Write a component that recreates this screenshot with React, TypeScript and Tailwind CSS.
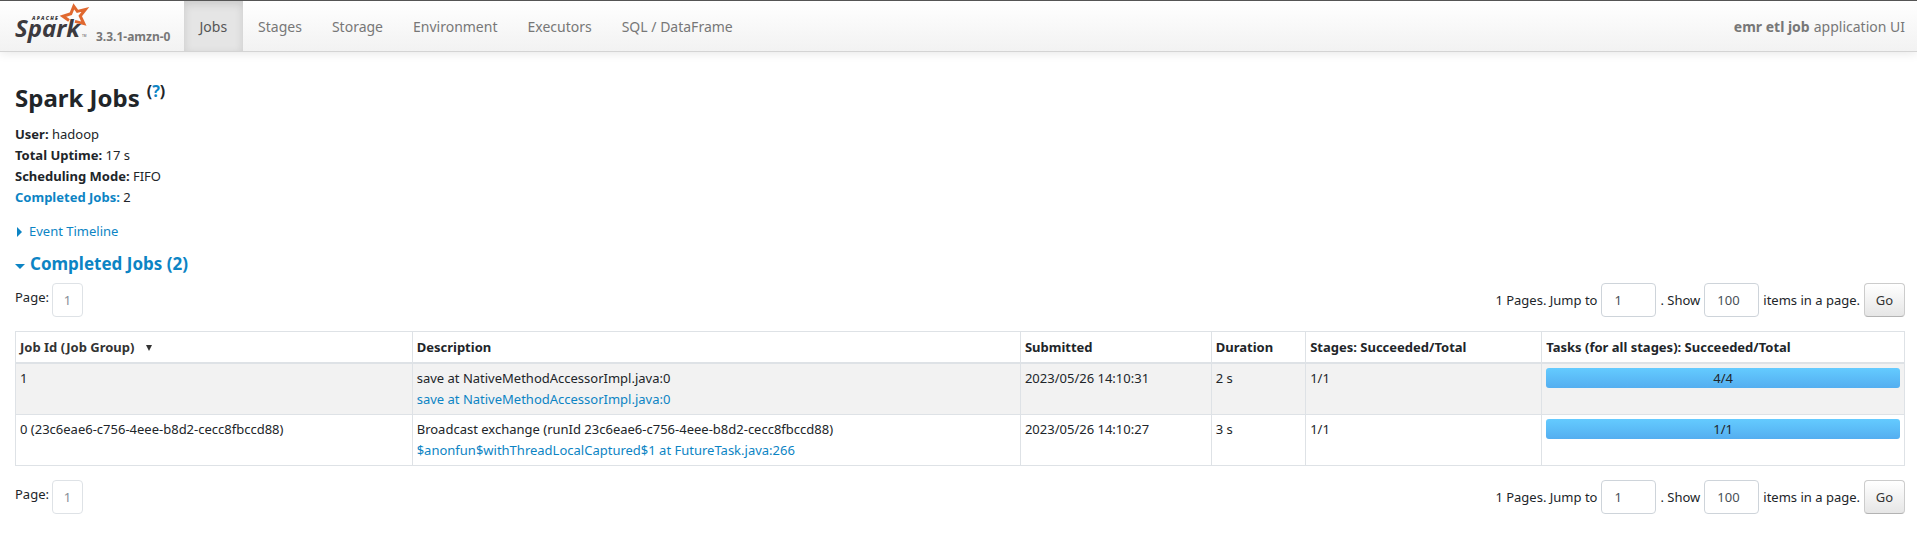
import { useState } from "react";

const tabs = ["Jobs", "Stages", "Storage", "Environment", "Executors", "SQL / DataFrame"];

const jobs = [
  {
    id: "1",
    description: "save at NativeMethodAccessorImpl.java:0",
    link: "save at NativeMethodAccessorImpl.java:0",
    submitted: "2023/05/26 14:10:31",
    duration: "2 s",
    stages: "1/1",
    tasks: "4/4",
  },
  {
    id: "0 (23c6eae6-c756-4eee-b8d2-cecc8fbccd88)",
    description: "Broadcast exchange (runId 23c6eae6-c756-4eee-b8d2-cecc8fbccd88)",
    link: "$anonfun$withThreadLocalCaptured$1 at FutureTask.java:266",
    submitted: "2023/05/26 14:10:27",
    duration: "3 s",
    stages: "1/1",
    tasks: "1/1",
  },
];

function SparkLogo() {
  return (
    <svg className="h-[50px] w-20 shrink-0" viewBox="0 0 80 50" role="img" aria-label="Apache Spark">
      <path
        d="M57 19.4 L51 15.2 L58.8 12.8 L61.8 5.4 L65.4 10.4 L73.4 8.4 L68.2 15 L71.8 22.6 L63 20.4"
        fill="none"
        stroke="#e0682f"
        strokeWidth="3"
        strokeLinejoin="miter"
      />
      <text x="20" y="19" fontFamily="Open Sans, sans-serif" fontSize="5" fontWeight="800" fontStyle="italic" fill="#3c3a3e">
        A P A C H E
      </text>
      <text x="3" y="36" fontFamily="Open Sans, sans-serif" fontSize="24" fontWeight="700" fontStyle="italic" fill="#3c3a3e">
        Spark
      </text>
      <text x="70" y="36" fontFamily="Open Sans, sans-serif" fontSize="3" fill="#3c3a3e">
        TM
      </text>
    </svg>
  );
}

function Pager({ name }: { name: string }) {
  const [page, setPage] = useState("1");
  const [size, setSize] = useState("100");
  const input =
    "h-[34px] w-[55px] rounded border border-[#ced4da] bg-white px-3 text-[13px] text-[#495057]";
  return (
    <div className="flex items-center justify-between">
      <div className="flex items-start gap-[3px]">
        <span className="pt-1">Page:</span>
        <a
          href="#page"
          className="flex h-[34px] w-[31px] items-center justify-center rounded border border-[#dee2e6] text-[#868e96]"
        >
          1
        </a>
      </div>
      <form className="flex items-center gap-1" onSubmit={(e) => e.preventDefault()}>
        <label htmlFor={`${name}-page`}>1 Pages. Jump to</label>
        <input id={`${name}-page`} className={input} value={page} onChange={(e) => setPage(e.target.value)} />
        <label htmlFor={`${name}-size`}>. Show</label>
        <input id={`${name}-size`} className={input} value={size} onChange={(e) => setSize(e.target.value)} />
        <label htmlFor={`${name}-size`}>items in a page.</label>
        <button
          type="submit"
          className="h-[34px] w-[41px] rounded border border-[#cccccc] border-b-[#b3b3b3] bg-linear-to-b from-white to-[#e6e6e6] text-[#333333]"
        >
          Go
        </button>
      </form>
    </div>
  );
}

export default function App() {
  const th = "border border-b-2 border-[#dee2e6] px-1 pt-[5px] pb-1 text-left font-bold";
  const td = "border border-[#dee2e6] p-1 align-top";
  return (
    <div className="bg-white font-['Noto_Sans',sans-serif] text-[13px] leading-[21px] text-[#212529]">
      <header className="flex h-[52px] items-stretch border-t border-b border-t-[#555555] border-b-[#d4d4d4] bg-linear-to-b from-white to-[#f2f2f2] pr-3 shadow-[0_1px_10px_rgba(0,0,0,0.1)]">
        <a href="#home" className="flex items-center pl-3">
          <SparkLogo />
          <span className="pt-5 pl-1 text-[12px] font-bold text-[#777777]">3.3.1-amzn-0</span>
        </a>
        <nav className="ml-[13px] flex text-[14px] text-[#777777]">
          {tabs.map((tab, i) => (
            <a
              key={tab}
              href="#tab"
              className={
                i === 0
                  ? "flex items-center bg-[#e5e5e5] px-4 text-[#555555] shadow-[inset_0_3px_8px_rgba(0,0,0,0.125)]"
                  : "flex items-center px-[15px]"
              }
            >
              {tab}
            </a>
          ))}
        </nav>
        <p className="ml-auto flex items-center gap-1 text-[14px] text-[#777777]">
          <strong>emr etl job</strong> application UI
        </p>
      </header>

      <main className="pt-7 pr-3 pl-[15px]">
        <h1 className="flex items-start gap-[7px] text-[24px] leading-[36px] font-bold">
          Spark Jobs
          <sup className="top-0 text-[16px] leading-[22px]">
            (
            <a href="#help" className="text-[#0c84c4]">
              ?
            </a>
            )
          </sup>
        </h1>
        <ul className="mt-2">
          <li>
            <strong>User:</strong> hadoop
          </li>
          <li>
            <strong>Total Uptime:</strong> 17 s
          </li>
          <li>
            <strong>Scheduling Mode:</strong> FIFO
          </li>
          <li>
            <a href="#completed" className="font-bold text-[#0c84c4]">
              Completed Jobs:
            </a>{" "}
            2
          </li>
        </ul>
        <a href="#timeline" className="mt-[13px] flex items-center gap-[7px] pl-0.5 text-[#0c84c4]">
          <svg className="h-2.5 w-[5px]" viewBox="0 0 5 10" aria-hidden="true">
            <path d="M0 0 L5 5 L0 10 Z" fill="currentColor" />
          </svg>
          Event Timeline
        </a>
        <h2 id="completed" className="mt-2.5 text-[17px] leading-6 font-bold text-[#0c84c4]">
          <a href="#completed" className="flex items-center gap-[5px]">
            <svg className="mt-1 h-[5px] w-2.5" viewBox="0 0 10 5" aria-hidden="true">
              <path d="M0 0 L10 0 L5 5 Z" fill="currentColor" />
            </svg>
            Completed Jobs (2)
          </a>
        </h2>
        <div className="mt-[7px]">
          <Pager name="top" />
        </div>
        <table className="my-[14px] w-full table-fixed border-collapse">
          <thead>
            <tr>
              <th className={`${th} w-[21%]`}>
                <a href="#sort" className="flex items-center gap-3 text-[#333333]">
                  Job Id (Job Group)
                  <svg className="h-1.5 w-1.5" viewBox="0 0 6 6" aria-hidden="true">
                    <path d="M0 0 L6 0 L3 6 Z" fill="currentColor" />
                  </svg>
                </a>
              </th>
              <th className={`${th} w-[32.2%]`}>Description</th>
              <th className={`${th} w-[10.1%]`}>Submitted</th>
              <th className={`${th} w-[5%]`}>Duration</th>
              <th className={`${th} w-[12.5%]`}>Stages: Succeeded/Total</th>
              <th className={`${th} w-[19.2%]`}>Tasks (for all stages): Succeeded/Total</th>
            </tr>
          </thead>
          <tbody>
            {jobs.map((job) => (
              <tr key={job.id} className="odd:bg-[#f2f2f2]">
                <td className={td}>{job.id}</td>
                <td className={td}>
                  <p>{job.description}</p>
                  <a href="#job" className="block text-[#0c84c4]">
                    {job.link}
                  </a>
                </td>
                <td className={td}>{job.submitted}</td>
                <td className={td}>{job.duration}</td>
                <td className={td}>{job.stages}</td>
                <td className={td}>
                  <div className="h-5 rounded-[3px] bg-linear-to-b from-[#64cbff] to-[#54aef0] text-center">
                    {job.tasks}
                  </div>
                </td>
              </tr>
            ))}
          </tbody>
        </table>
        <Pager name="bottom" />
      </main>
    </div>
  );
}
